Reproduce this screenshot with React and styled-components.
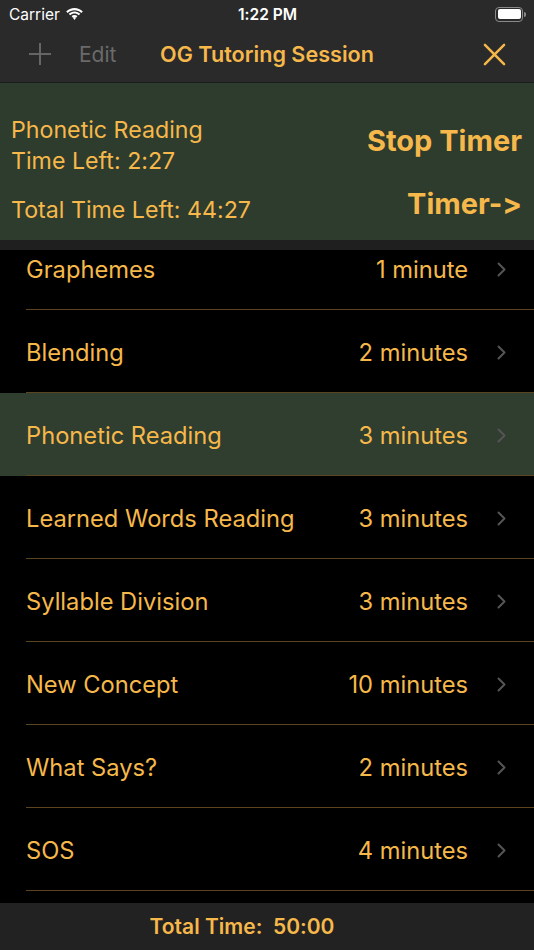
import React from 'react';
import styled, {createGlobalStyle} from 'styled-components';

const ORANGE = '#f6b84a';

const GlobalStyle = createGlobalStyle`
  html, body {
    margin: 0;
    padding: 0;
    background: #000;
  }
  body {
    font-family: Inter, "Noto Sans", "Liberation Sans", sans-serif;
    font-feature-settings: "calt" 0;
  }
`;

const Screen = styled.div`
  width: 534px;
  height: 950px;
  display: flex;
  flex-direction: column;
  background: #000;
  overflow: hidden;
`;

const StatusBar = styled.div`
  height: 28px;
  background: #2a2a2a;
  display: grid;
  grid-template-columns: 1fr auto 1fr;
  align-items: center;
  padding: 0 8px 0 9px;
  color: #fff;
  font-size: 15.5px;
`;

const Carrier = styled.div`
  display: flex;
  align-items: center;
  gap: 5px;
`;

const Clock = styled.div`
  font-weight: 600;
`;

const Battery = styled.div`
  justify-self: end;
  display: flex;
  align-items: center;
  gap: 1px;
`;

const BatteryBody = styled.div`
  width: 23px;
  height: 10px;
  border: 1.5px solid #8a8a8a;
  border-radius: 4px;
  padding: 1.5px;
  display: flex;
  &::after {
    content: '';
    flex: 1;
    background: #fff;
    border-radius: 2px;
  }
`;

const BatteryNub = styled.div`
  width: 2px;
  height: 5px;
  background: #8a8a8a;
  border-radius: 0 2px 2px 0;
`;

const NavBar = styled.div`
  height: 55px;
  background: #2a2a2a;
  display: grid;
  grid-template-columns: 1fr auto 1fr;
  align-items: center;
  padding: 0 28px 2px;
  border-bottom: 1px solid #1c1c1c;
  box-sizing: border-box;
`;

const NavLeft = styled.div`
  display: flex;
  align-items: center;
  gap: 27px;
`;

const NavButton = styled.span`
  color: #6a6a6a;
  font-size: 21px;
`;

const Title = styled.div`
  color: ${ORANGE};
  font-size: 21.6px;
  font-weight: 600;
`;

const NavRight = styled.div`
  justify-self: end;
  display: flex;
`;

const Header = styled.div`
  height: 157px;
  background: #2e3c2e;
  display: flex;
  justify-content: space-between;
  padding: 0 12px 0 11px;
  color: ${ORANGE};
`;

const HeaderLeft = styled.div`
  display: flex;
  flex-direction: column;
  padding-top: 32px;
  font-size: 23.2px;
  line-height: 31px;
`;

const TotalLeft = styled.div`
  margin-top: 17px;
  padding-top: 1px;
`;

const HeaderRight = styled.div`
  display: flex;
  flex-direction: column;
  align-items: flex-end;
  padding-top: 39px;
  gap: 25px;
  font-size: 29px;
  font-weight: 700;
  line-height: 38px;
`;

const Strip = styled.div`
  height: 10px;
  background: #1f1f1f;
`;

const List = styled.div`
  flex: 1;
  overflow: hidden;
  background: #000;
`;

const ListInner = styled.div`
  margin-top: -23px;
`;

const Row = styled.div`
  height: 83px;
  display: flex;
  background: ${p => (p.$active ? '#2f3e2f' : '#000')};
  padding-left: 26px;
  box-sizing: border-box;
`;

const RowContent = styled.div`
  flex: 1;
  display: flex;
  align-items: center;
  border-bottom: 1px solid #5a4520;
  padding: 3px 28px 0 0;
  color: ${ORANGE};
  font-size: 23.7px;
`;

const RowName = styled.span`
  flex: 1;
`;

const RowTime = styled.span`
  margin-right: 29px;
`;

const Footer = styled.div`
  height: 47px;
  background: #222;
  display: flex;
  align-items: center;
  justify-content: center;
  padding-right: 50px;
  color: ${ORANGE};
  font-size: 21px;
  font-weight: 600;
  white-space: pre;
`;

const Wifi = () => (
  <svg width="19" height="14" viewBox="0 0 19 14">
    <path d="M9.5 3.2c2.6 0 5 1 6.8 2.7l1.5-1.5C15.6 2.3 12.7 1 9.5 1S3.4 2.3 1.2 4.4l1.5 1.5C4.5 4.2 6.9 3.2 9.5 3.2z" fill="#fff"/>
    <path d="M9.5 6.6c1.6 0 3.1.6 4.3 1.7l1.5-1.5C13.8 5.3 11.7 4.4 9.5 4.4S5.2 5.3 3.7 6.8l1.5 1.5c1.2-1.1 2.7-1.7 4.3-1.7z" fill="#fff"/>
    <path d="M9.5 9.9c.7 0 1.3.3 1.8.7L9.5 13 7.7 10.6c.5-.4 1.1-.7 1.8-.7z" fill="#fff"/>
    <path d="M9.5 8c1.1 0 2.1.4 2.9 1.1l-1.1 1.5c-.5-.4-1.1-.7-1.8-.7s-1.3.3-1.8.7L6.6 9.1C7.4 8.4 8.4 8 9.5 8z" fill="#fff"/>
  </svg>
);

const Plus = () => (
  <svg width="24" height="24" viewBox="0 0 24 24">
    <path d="M12 1v22M1 12h22" stroke="#666" strokeWidth="2"/>
  </svg>
);

const Close = () => (
  <svg width="23" height="23" viewBox="0 0 24 24">
    <path d="M2 2l20 20M22 2L2 22" stroke={ORANGE} strokeWidth="2.6" strokeLinecap="round"/>
  </svg>
);

const Chevron = () => (
  <svg width="9" height="15" viewBox="0 0 9 15">
    <path d="M1.5 1.5l6 6-6 6" stroke="#555" strokeWidth="2" fill="none" strokeLinecap="round" strokeLinejoin="round"/>
  </svg>
);

const steps = [
  {name: 'Graphemes', time: '1 minute'},
  {name: 'Blending', time: '2 minutes'},
  {name: 'Phonetic Reading', time: '3 minutes', active: true},
  {name: 'Learned Words Reading', time: '3 minutes'},
  {name: 'Syllable Division', time: '3 minutes'},
  {name: 'New Concept', time: '10 minutes'},
  {name: 'What Says?', time: '2 minutes'},
  {name: 'SOS', time: '4 minutes'},
];

const App = () => (
  <Screen>
    <GlobalStyle/>
    <StatusBar>
      <Carrier>Carrier <Wifi/></Carrier>
      <Clock>1:22 PM</Clock>
      <Battery>
        <BatteryBody/>
        <BatteryNub/>
      </Battery>
    </StatusBar>
    <NavBar>
      <NavLeft>
        <Plus/>
        <NavButton>Edit</NavButton>
      </NavLeft>
      <Title>OG Tutoring Session</Title>
      <NavRight>
        <Close/>
      </NavRight>
    </NavBar>
    <Header>
      <HeaderLeft>
        <div>Phonetic Reading</div>
        <div>Time Left: 2:27</div>
        <TotalLeft>Total Time Left: 44:27</TotalLeft>
      </HeaderLeft>
      <HeaderRight>
        <div>Stop Timer</div>
        <div>Timer-&gt;</div>
      </HeaderRight>
    </Header>
    <Strip/>
    <List>
      <ListInner>
        {steps.map(s => (
          <Row key={s.name} $active={s.active}>
            <RowContent>
              <RowName>{s.name}</RowName>
              <RowTime>{s.time}</RowTime>
              <Chevron/>
            </RowContent>
          </Row>
        ))}
      </ListInner>
    </List>
    <Footer>{'Total Time:  50:00'}</Footer>
  </Screen>
);

export default App;
